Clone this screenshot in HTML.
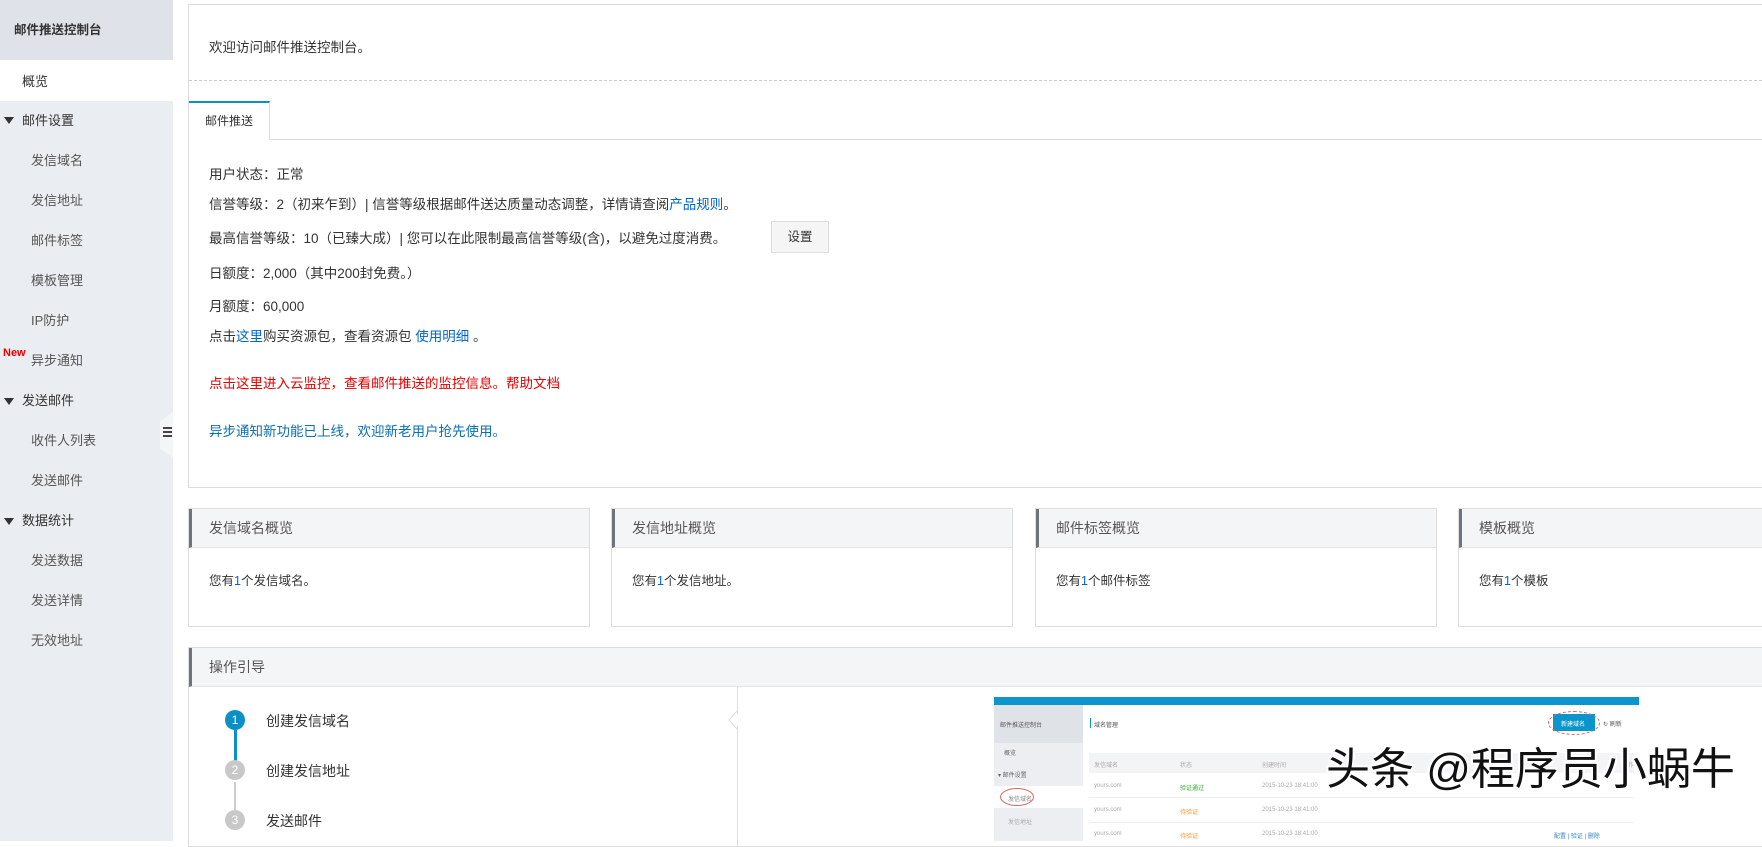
<!DOCTYPE html>
<html><head><meta charset="utf-8">
<style>
*{margin:0;padding:0;box-sizing:border-box}
body{width:1762px;height:841px;overflow:hidden;background:#fff;font-family:"Liberation Sans","Noto Sans CJK SC",sans-serif;font-size:13px;color:#333;position:relative}
.a{position:absolute;white-space:nowrap}
#side{position:absolute;left:0;top:0;width:173px;height:841px;background:#eaedf1}
.si{position:absolute;left:31px;font-size:13px;color:#555;line-height:16px}
.sg{position:absolute;left:22px;font-size:13px;color:#333;line-height:16px}
.tri{position:absolute;left:4px;width:0;height:0;border-left:5px solid transparent;border-right:5px solid transparent;border-top:7px solid #333}
.blue{color:#0066cc}
.card{position:absolute;top:508px;height:119px;border:1px solid #ddd;background:#fff}
.card .h{height:39px;background:#f4f5f7;border-left:3px solid #6f737c;border-bottom:1px solid #e3e3e3;padding-left:17px;line-height:38px;font-size:14px;color:#555}
.card .b{padding:22px 0 0 20px;font-size:12.5px;color:#333}
.mt{position:absolute;font-size:6px;color:#aaa;white-space:nowrap}
</style></head><body>
<div id="side">
  <div class="a" style="left:0;top:0;width:173px;height:60px;background:#dfe2e8"></div>
  <div class="a" style="left:14px;top:19px;font-size:12.5px;font-weight:bold;color:#333">邮件推送控制台</div>
  <div class="a" style="left:0;top:60px;width:173px;height:41px;background:#fff"></div>
  <div class="sg" style="top:74px">概览</div>
  <div class="tri" style="top:117px"></div><div class="sg" style="top:113px">邮件设置</div>
  <div class="si" style="top:153px">发信域名</div>
  <div class="si" style="top:193px">发信地址</div>
  <div class="si" style="top:233px">邮件标签</div>
  <div class="si" style="top:273px">模板管理</div>
  <div class="si" style="top:313px">IP防护</div>
  <div class="a" style="left:3px;top:347px;color:#e00;font-weight:bold;font-size:11px">New</div>
  <div class="si" style="top:353px">异步通知</div>
  <div class="tri" style="top:398px"></div><div class="sg" style="top:393px">发送邮件</div>
  <div class="si" style="top:433px">收件人列表</div>
  <div class="si" style="top:473px">发送邮件</div>
  <div class="tri" style="top:518px"></div><div class="sg" style="top:513px">数据统计</div>
  <div class="si" style="top:553px">发送数据</div>
  <div class="si" style="top:593px">发送详情</div>
  <div class="si" style="top:633px">无效地址</div>
  <div class="a" style="left:160px;top:412px;width:13px;height:46px;background:#f4f5f7;clip-path:polygon(0 20%,100% 0,100% 100%,0 80%)"></div>
  <div class="a" style="left:163px;top:427px;width:9px;height:2px;background:#444;box-shadow:0 4px 0 #444,0 8px 0 #444"></div>
</div>

<div class="a" style="left:188px;top:4px;width:1580px;height:484px;border:1px solid #ddd;background:#fff"></div>
<div class="a" style="left:209px;top:36px;font-size:13.5px">欢迎访问邮件推送控制台。</div>
<div class="a" style="left:189px;top:80px;width:1573px;border-top:1px dashed #ccc"></div>
<div class="a" style="left:189px;top:139px;width:1573px;border-top:1px solid #ddd"></div>
<div class="a" style="left:189px;top:101px;width:81px;height:39px;background:#fff;border-top:2px solid #0a8fc7;border-right:1px solid #ddd;font-size:12px;line-height:36px;padding-left:16px">邮件推送</div>
<div class="a" style="left:209px;top:163px;font-size:13.5px">用户状态：正常</div>
<div class="a" style="left:209px;top:193px;font-size:13.5px">信誉等级：2（初来乍到）| 信誉等级根据邮件送达质量动态调整，详情请查阅<span class="blue">产品规则</span>。</div>
<div class="a" style="left:209px;top:227px;font-size:13.5px">最高信誉等级：10（已臻大成）| 您可以在此限制最高信誉等级(含)，以避免过度消费。</div>
<div class="a" style="left:771px;top:221px;width:58px;height:32px;border:1px solid #ddd;background:#f5f5f5;font-size:12.5px;text-align:center;line-height:30px">设置</div>
<div class="a" style="left:209px;top:262px;font-size:13.5px">日额度：2,000（其中200封免费。）</div>
<div class="a" style="left:209px;top:295px;font-size:13.5px">月额度：60,000</div>
<div class="a" style="left:209px;top:325px;font-size:13.5px">点击<span class="blue">这里</span>购买资源包，查看资源包 <span class="blue">使用明细</span> 。</div>
<div class="a" style="left:209px;top:372px;font-size:13.5px;color:#e60000">点击这里进入云监控，查看邮件推送的监控信息。帮助文档</div>
<div class="a" style="left:209px;top:420px;font-size:13.5px;color:#0a6fb5">异步通知新功能已上线，欢迎新老用户抢先使用。</div>

<div class="card" style="left:188px;width:402px"><div class="h">发信域名概览</div><div class="b">您有<span class="blue">1</span>个发信域名。</div></div>
<div class="card" style="left:611px;width:402px"><div class="h">发信地址概览</div><div class="b">您有<span class="blue">1</span>个发信地址。</div></div>
<div class="card" style="left:1035px;width:402px"><div class="h">邮件标签概览</div><div class="b">您有<span class="blue">1</span>个邮件标签</div></div>
<div class="card" style="left:1458px;width:320px"><div class="h">模板概览</div><div class="b">您有<span class="blue">1</span>个模板</div></div>

<div class="a" style="left:188px;top:647px;width:1580px;height:200px;border:1px solid #ddd;background:#fff"></div>
<div class="a" style="left:189px;top:648px;width:1573px;height:39px;background:#f4f5f7;border-left:3px solid #6f737c;border-bottom:1px solid #e3e3e3;padding-left:17px;line-height:38px;font-size:14px;color:#555">操作引导</div>
<div class="a" style="left:737px;top:687px;width:1px;height:160px;background:#ddd"></div>
<div class="a" style="left:729px;top:712px;width:12px;height:16px;background:#fff;clip-path:polygon(100% 0,0 50%,100% 100%)"></div>
<svg class="a" style="left:728px;top:711px" width="10" height="18"><polyline points="9,0 1,9 9,18" fill="none" stroke="#ddd"/></svg>
<div class="a" style="left:234px;top:730px;width:3px;height:32px;background:#0a8fc7"></div>
<div class="a" style="left:234px;top:782px;width:2px;height:30px;background:#ccc"></div>
<div class="a" style="left:225px;top:710px;width:20px;height:20px;border-radius:50%;background:#0a8fc7;color:#fff;text-align:center;line-height:20px;font-size:12px">1</div>
<div class="a" style="left:225px;top:760px;width:20px;height:20px;border-radius:50%;background:#c8c8c8;color:#fff;text-align:center;line-height:20px;font-size:12px">2</div>
<div class="a" style="left:225px;top:810px;width:20px;height:20px;border-radius:50%;background:#c8c8c8;color:#fff;text-align:center;line-height:20px;font-size:12px">3</div>
<div class="a" style="left:266px;top:711px;font-size:14px">创建发信域名</div>
<div class="a" style="left:266px;top:761px;font-size:14px">创建发信地址</div>
<div class="a" style="left:266px;top:811px;font-size:14px">发送邮件</div>

<div class="a" style="left:994px;top:697px;width:645px;height:8px;background:#0a95cc"></div>
<div class="a" style="left:994px;top:705px;width:89px;height:136px;background:#eceef1"></div>
<div class="a" style="left:994px;top:705px;width:89px;height:38px;background:#dfe2e7"></div>
<div class="a" style="left:994px;top:786px;width:89px;height:22px;background:#fff"></div>
<div class="mt" style="left:1000px;top:720px;color:#555">邮件推送控制台</div>
<div class="mt" style="left:1004px;top:748px;color:#666">概览</div>
<div class="mt" style="left:998px;top:770px;color:#666">▾ 邮件设置</div>
<div class="a" style="left:1000px;top:788px;width:34px;height:18px;border:1px solid #d66;border-radius:50%"></div>
<div class="mt" style="left:1008px;top:794px;color:#888">发信域名</div>
<div class="mt" style="left:1008px;top:817px">发信地址</div>
<div class="a" style="left:1090px;top:718px;width:1px;height:10px;background:#0a95cc"></div>
<div class="mt" style="left:1094px;top:720px;color:#555">域名管理</div>
<div class="a" style="left:1553px;top:714px;width:42px;height:17px;background:#0a95cc"></div>
<div class="mt" style="left:1561px;top:719px;color:#fff">新建域名</div>
<div class="a" style="left:1548px;top:711px;width:52px;height:24px;border:1px dashed #d66;border-radius:50%"></div>
<div class="mt" style="left:1603px;top:719px;color:#555">↻ 刷新</div>
<div class="a" style="left:1089px;top:753px;width:545px;height:20px;background:#f3f4f6"></div>
<div class="a" style="left:1089px;top:797px;width:545px;height:1px;background:#eee"></div>
<div class="a" style="left:1089px;top:822px;width:545px;height:1px;background:#eee"></div>
<div class="mt" style="left:1094px;top:760px">发信域名</div><div class="mt" style="left:1180px;top:760px">状态</div><div class="mt" style="left:1262px;top:760px">创建时间</div><div class="mt" style="left:1622px;top:760px">操作</div>
<div class="mt" style="left:1094px;top:783px">yours.com</div><div class="mt" style="left:1180px;top:783px;color:#3a3">验证通过</div><div class="mt" style="left:1262px;top:783px">2015-10-23 18:41:00</div>
<div class="mt" style="left:1094px;top:807px">yours.com</div><div class="mt" style="left:1180px;top:807px;color:#f93">待验证</div><div class="mt" style="left:1262px;top:807px">2015-10-23 18:41:00</div>
<div class="mt" style="left:1094px;top:831px">yours.com</div><div class="mt" style="left:1180px;top:831px;color:#f93">待验证</div><div class="mt" style="left:1262px;top:831px">2015-10-23 18:41:00</div>
<div class="mt" style="left:1554px;top:831px;color:#38c">配置 | 验证 | 删除</div>

<div class="a" style="left:1326px;top:742px;font-size:44px;line-height:56px;color:#111;text-shadow:2px 2px 0 #fff,-2px -2px 0 #fff,2px -2px 0 #fff,-2px 2px 0 #fff">头条 @程序员小蜗牛</div>
</body></html>
